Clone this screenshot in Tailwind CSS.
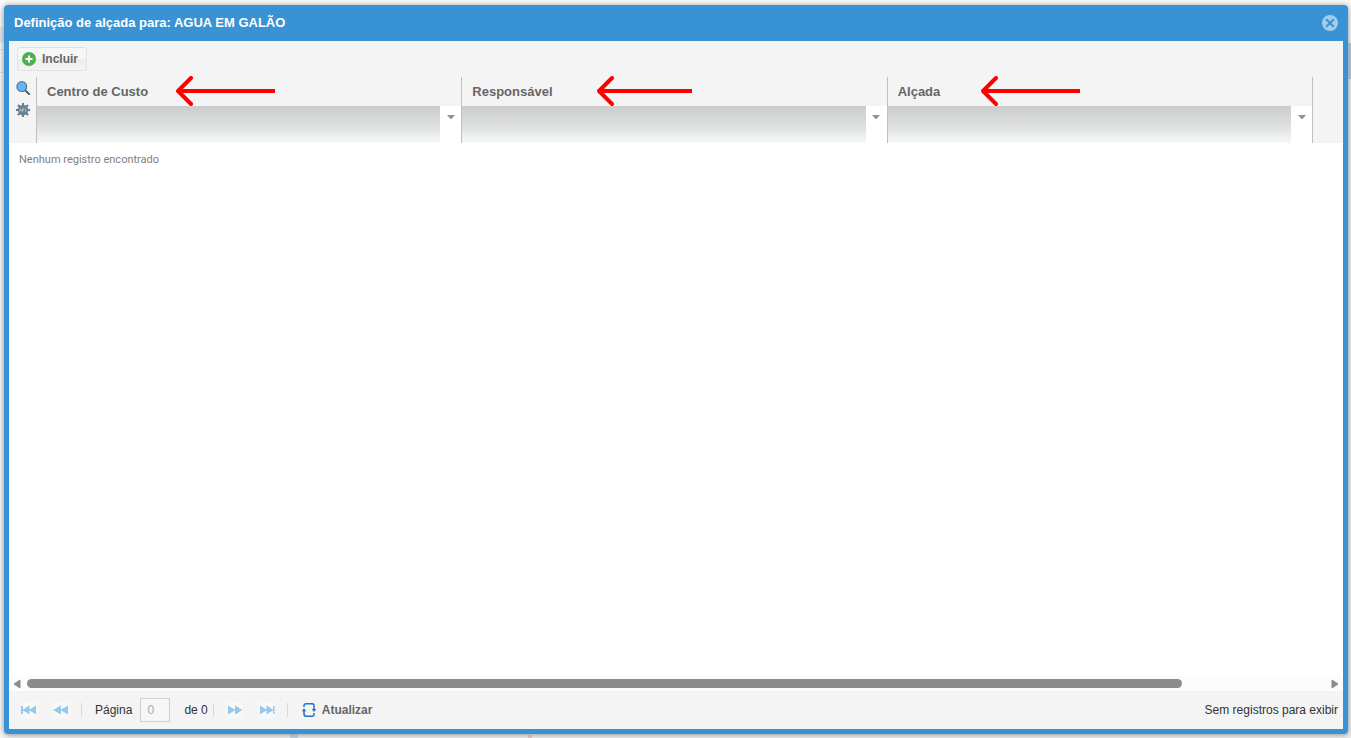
<!DOCTYPE html>
<html lang="pt-BR">
<head>
<meta charset="utf-8">
<title>Definição de alçada</title>
<script src="https://cdn.jsdelivr.net/npm/@tailwindcss/browser@4"></script>
</head>
<body class="relative flex h-screen overflow-hidden bg-[#fafafa] pt-[5px] pr-[3px] pb-1 pl-1 font-['Liberation_Sans',Arial,sans-serif] text-[12px] text-[#333]">
<!-- page behind the dialog -->
<div class="absolute left-0 top-[27px] h-4 w-2 bg-[#dfe9f1]" aria-hidden="true"></div>
<div class="absolute left-0 top-[49px] h-6 w-2 border-y border-[#ddd]" aria-hidden="true"></div>
<div class="absolute right-0 top-[43px] h-9 w-2 bg-[#b4cbe0]" aria-hidden="true"></div>
<div class="absolute right-0 top-[79px] bottom-0 w-2 bg-[#f0f0f0]" aria-hidden="true"></div>
<div class="absolute bottom-0 left-[290px] h-2 w-2 bg-[#c2dcf2]" aria-hidden="true"></div>
<div class="absolute bottom-0 left-[528px] h-[3px] w-1 bg-[#f9cccc]" aria-hidden="true"></div>

<main role="dialog" aria-labelledby="title" class="relative flex min-w-0 flex-1 flex-col rounded-[4px] bg-[#3892d4] px-[5px] pb-[5px] shadow-[0_1px_6px_#888]">
  <header class="flex h-9 shrink-0 items-center justify-between pl-[5px] pr-[5px]">
    <h1 id="title" class="text-[13px] font-bold leading-4 text-white">Definição de alçada para: AGUA EM GALÃO</h1>
    <button type="button" aria-label="Fechar" class="block size-4">
      <svg viewBox="0 0 16 16" class="size-4"><circle cx="8" cy="8" r="8" fill="#a3cdec"/><path d="M4.200 4.200l7.600 7.600M11.800 4.200l-7.600 7.600" stroke="#3892d4" stroke-width="2" fill="none"/></svg>
    </button>
  </header>

  <div class="flex h-9 shrink-0 items-center bg-[#f4f4f4] px-2">
    <button type="button" class="flex h-6 items-center gap-[6px] rounded-[3px] border border-[#e1e1e1] bg-[linear-gradient(#f6f6f6_50%,#ececec_50%,#f4f4f4)] pr-2 pl-1 text-[12px] font-bold leading-4 text-[#666]">
      <svg viewBox="0 0 14 14" class="size-[14px]"><circle cx="7" cy="7" r="7" fill="#4caf50"/><path d="M7 3.500v7M3.500 7h7" stroke="#fff" stroke-width="2"/></svg>
      Incluir
    </button>
  </div>

  <div class="min-h-0 flex-1 bg-white">
    <table class="w-full table-fixed border-separate border-spacing-0">
      <colgroup><col class="w-[27px]"><col><col><col><col class="w-[31px]"></colgroup>
      <thead class="bg-[#f4f4f4] text-left text-[13px] leading-4 text-[#666]">
        <tr class="h-[29px]">
          <td rowspan="2" class="p-0 pt-1 pl-[7px] align-top">
            <div class="flex flex-col gap-2">
              <button type="button" aria-label="Pesquisar" class="block size-[14px]"><svg viewBox="0 0 14 14" class="size-[14px]"><path d="M9.3 9.5l3.8 3.6" stroke="#455a64" stroke-width="1.9" stroke-linecap="round"/><circle cx="5.8" cy="5.6" r="4.9" fill="#64b5f6" stroke="#607684" stroke-width="1.2"/></svg></button>
              <button type="button" aria-label="Configurações" class="block size-[14px]"><svg viewBox="0 0 14 14" class="size-[14px]"><path d="M7 0v14M0 7h14M2 2l10 10M12 2L2 12" stroke="#607d8b" stroke-width="2"/><circle cx="7" cy="7" r="5.300" fill="#6b8492"/><path d="M3.500 8.500l1-2.800 1 2.800M6.500 8.700V5.800h1.300v1.400H6.500M9.800 5.600v3" fill="none" stroke="#b4c2ca" stroke-width=".9"/></svg></button>
            </div>
          </td>
          <th scope="col" class="relative border-l border-[#c0c0c0] p-0 pl-[10px]">Centro de Custo
            <svg viewBox="0 0 99 30" class="absolute -top-px left-[139px] h-[30px] w-[99px]" fill="none" stroke="#f00" stroke-width="4"><path d="M3 15h96"/><path d="M15 2L2 15l13 13" stroke-linecap="round" stroke-linejoin="round"/></svg>
          </th>
          <th scope="col" class="relative border-l border-[#c0c0c0] p-0 pl-[10px]">Responsável
            <svg viewBox="0 0 95 30" class="absolute -top-px left-[135px] h-[30px] w-[95px]" fill="none" stroke="#f00" stroke-width="4"><path d="M3 15h92"/><path d="M15 2L2 15l13 13" stroke-linecap="round" stroke-linejoin="round"/></svg>
          </th>
          <th scope="col" class="relative border-l border-[#c0c0c0] p-0 pl-[10px]">Alçada
            <svg viewBox="0 0 99 30" class="absolute -top-px left-[93px] h-[30px] w-[99px]" fill="none" stroke="#f00" stroke-width="4"><path d="M3 15h96"/><path d="M15 2L2 15l13 13" stroke-linecap="round" stroke-linejoin="round"/></svg>
          </th>
          <td rowspan="2" class="border-l border-[#c0c0c0] p-0"></td>
        </tr>
        <tr class="h-[37px]">
          <td class="border-l border-[#c0c0c0] p-0"><div class="flex h-[37px] bg-white"><input aria-label="Filtrar Centro de Custo" class="h-full min-w-0 flex-1 bg-linear-to-b from-[#cbcbcb] via-[#dcdedd] to-[#f7f8fb] px-2"><button type="button" aria-label="Opções de Centro de Custo" class="flex w-[21px] justify-center pt-[9px]"><svg viewBox="0 0 8 4" class="h-1 w-2"><path d="M0 0h8L4.500 4h-1z" fill="#919191"/></svg></button></div></td>
          <td class="border-l border-[#c0c0c0] p-0"><div class="flex h-[37px] bg-white"><input aria-label="Filtrar Responsável" class="h-full min-w-0 flex-1 bg-linear-to-b from-[#cbcbcb] via-[#dcdedd] to-[#f7f8fb] px-2"><button type="button" aria-label="Opções de Responsável" class="flex w-[21px] justify-center pt-[9px]"><svg viewBox="0 0 8 4" class="h-1 w-2"><path d="M0 0h8L4.500 4h-1z" fill="#919191"/></svg></button></div></td>
          <td class="border-l border-[#c0c0c0] p-0"><div class="flex h-[37px] bg-white"><input aria-label="Filtrar Alçada" class="h-full min-w-0 flex-1 bg-linear-to-b from-[#cbcbcb] via-[#dcdedd] to-[#f7f8fb] px-2"><button type="button" aria-label="Opções de Alçada" class="flex w-[21px] justify-center pt-[9px]"><svg viewBox="0 0 8 4" class="h-1 w-2"><path d="M0 0h8L4.500 4h-1z" fill="#919191"/></svg></button></div></td>
        </tr>
      </thead>
      <tbody>
        <tr><td colspan="5" class="p-0 pt-[9px] pl-[10px] font-[Roboto,Tahoma,sans-serif] text-[11px] leading-4 text-[#808080]">Nenhum registro encontrado</td></tr>
      </tbody>
    </table>
  </div>

  <div class="flex h-[15px] shrink-0 items-center gap-[6px] bg-[#fcfcfc] px-1" aria-hidden="true">
    <svg viewBox="0 0 8 10" class="h-[10px] w-2"><path d="M7 1v8L1 5z" fill="#8b8b8b" stroke="#8b8b8b" stroke-linejoin="round"/></svg>
    <div class="h-[9px] flex-1"><div class="h-full w-[89%] rounded-full bg-[#8b8b8b]"></div></div>
    <svg viewBox="0 0 8 10" class="h-[10px] w-2"><path d="M1 1v8l6-4z" fill="#8b8b8b" stroke="#8b8b8b" stroke-linejoin="round"/></svg>
  </div>

  <footer class="flex h-[38px] shrink-0 items-center bg-[#f4f4f4] pr-[5px] pl-3 leading-4">
    <div class="flex gap-4">
      <button type="button" aria-label="Primeira página" class="block size-4 bg-[#f8f8f8]"><svg viewBox="0 0 16 16" class="size-4" fill="#95c8ea"><path d="M0 4h2v8H0zM8.500 3.500v9L1.500 8zM15 3.500v9L8 8z"/></svg></button>
      <button type="button" aria-label="Página anterior" class="block size-4 bg-[#f8f8f8]"><svg viewBox="0 0 16 16" class="size-4" fill="#95c8ea"><path d="M8 3.500v9L0 8zM15 3.500v9L7.500 8z"/></svg></button>
    </div>
    <div class="ml-3 h-[14px] w-px bg-[#d8d8d8]"></div>
    <label for="page" class="ml-[13px]">Página</label>
    <input id="page" value="0" disabled class="ml-2 h-6 w-[30px] border border-[#d0d0d0] bg-[#f6f6f6] px-[6px] text-[12px] text-[#aaa]">
    <span class="ml-[14px]">de 0</span>
    <div class="ml-[5px] h-[14px] w-px bg-[#d8d8d8]"></div>
    <div class="ml-[13px] flex gap-4">
      <button type="button" aria-label="Próxima página" class="block size-4 bg-[#f8f8f8]"><svg viewBox="0 0 16 16" class="size-4" fill="#95c8ea"><path d="M1 3.500v9L8.500 8zM8 3.500v9l7.500-4.500z"/></svg></button>
      <button type="button" aria-label="Última página" class="block size-4 bg-[#f8f8f8]"><svg viewBox="0 0 16 16" class="size-4" fill="#95c8ea"><path d="M14 4h1.500v8H14zM1 3.500v9L8 8zM7.500 3.500v9l7-4.500z"/></svg></button>
    </div>
    <div class="ml-3 h-[14px] w-px bg-[#d8d8d8]"></div>
    <button type="button" class="ml-[13px] flex items-center gap-[5px] font-bold text-[#666]">
      <svg viewBox="0 0 16 16" class="size-4" fill="none" stroke="#2372ca" stroke-width="1.500"><path d="M3 5V3.500Q3 1.800 5 1.800h6q2 0 2 2V8"/><path d="M3 8v4q0 2.200 2 2.200h6q2 0 2-2V11"/><path d="M.8 9.300h4.400L3 6.300zM10.800 7h4.400L13 10z" fill="#2372ca" stroke="none"/></svg>
      Atualizar
    </button>
    <span class="ml-auto">Sem registros para exibir</span>
  </footer>
</main>
</body>
</html>
